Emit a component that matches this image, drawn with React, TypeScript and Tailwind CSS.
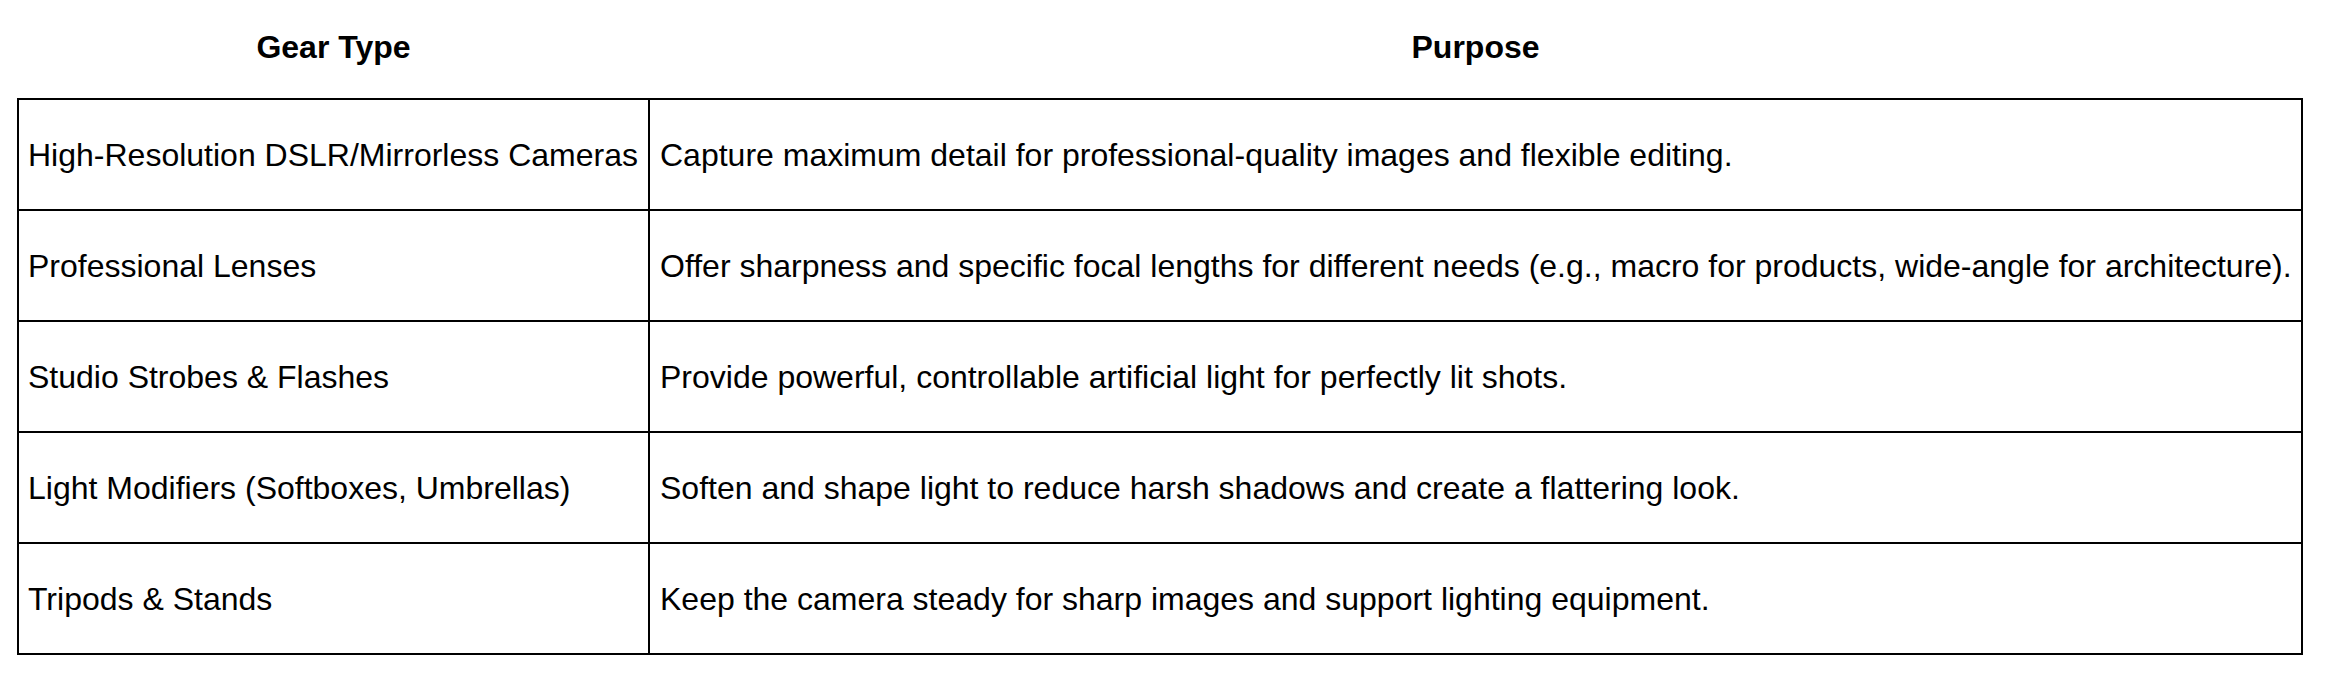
import React from 'react';

const gear = [
  {
    type: "High-Resolution DSLR/Mirrorless Cameras",
    purpose: "Capture maximum detail for professional-quality images and flexible editing."
  },
  {
    type: "Professional Lenses",
    purpose: "Offer sharpness and specific focal lengths for different needs (e.g., macro for products, wide-angle for architecture)."
  },
  {
    type: "Studio Strobes & Flashes",
    purpose: "Provide powerful, controllable artificial light for perfectly lit shots."
  },
  {
    type: "Light Modifiers (Softboxes, Umbrellas)",
    purpose: "Soften and shape light to reduce harsh shadows and create a flattering look."
  },
  {
    type: "Tripods & Stands",
    purpose: "Keep the camera steady for sharp images and support lighting equipment."
  }
];

export default function App() {
  return (
    <div className="bg-white w-[2344px] h-[686px] pl-[17px] font-['Liberation_Sans',Arial,sans-serif] text-black text-[32px]">
      <table className="border-collapse table-fixed w-[2286px]">
        <colgroup>
          <col className="w-[631px]" />
          <col />
        </colgroup>
        <thead>
          <tr className="h-[99px]">
            <th className="font-bold text-center align-middle pb-[4px]">Gear Type</th>
            <th className="font-bold text-center align-middle pb-[4px]">Purpose</th>
          </tr>
        </thead>
        <tbody>
          {gear.map((row, index) => (
            <tr key={index} className="h-[111px]">
              <td className="border-2 border-black px-[9px] align-middle whitespace-nowrap">{row.type}</td>
              <td className="border-2 border-black px-[10px] align-middle whitespace-nowrap">{row.purpose}</td>
            </tr>
          ))}
        </tbody>
      </table>
    </div>
  );
}
